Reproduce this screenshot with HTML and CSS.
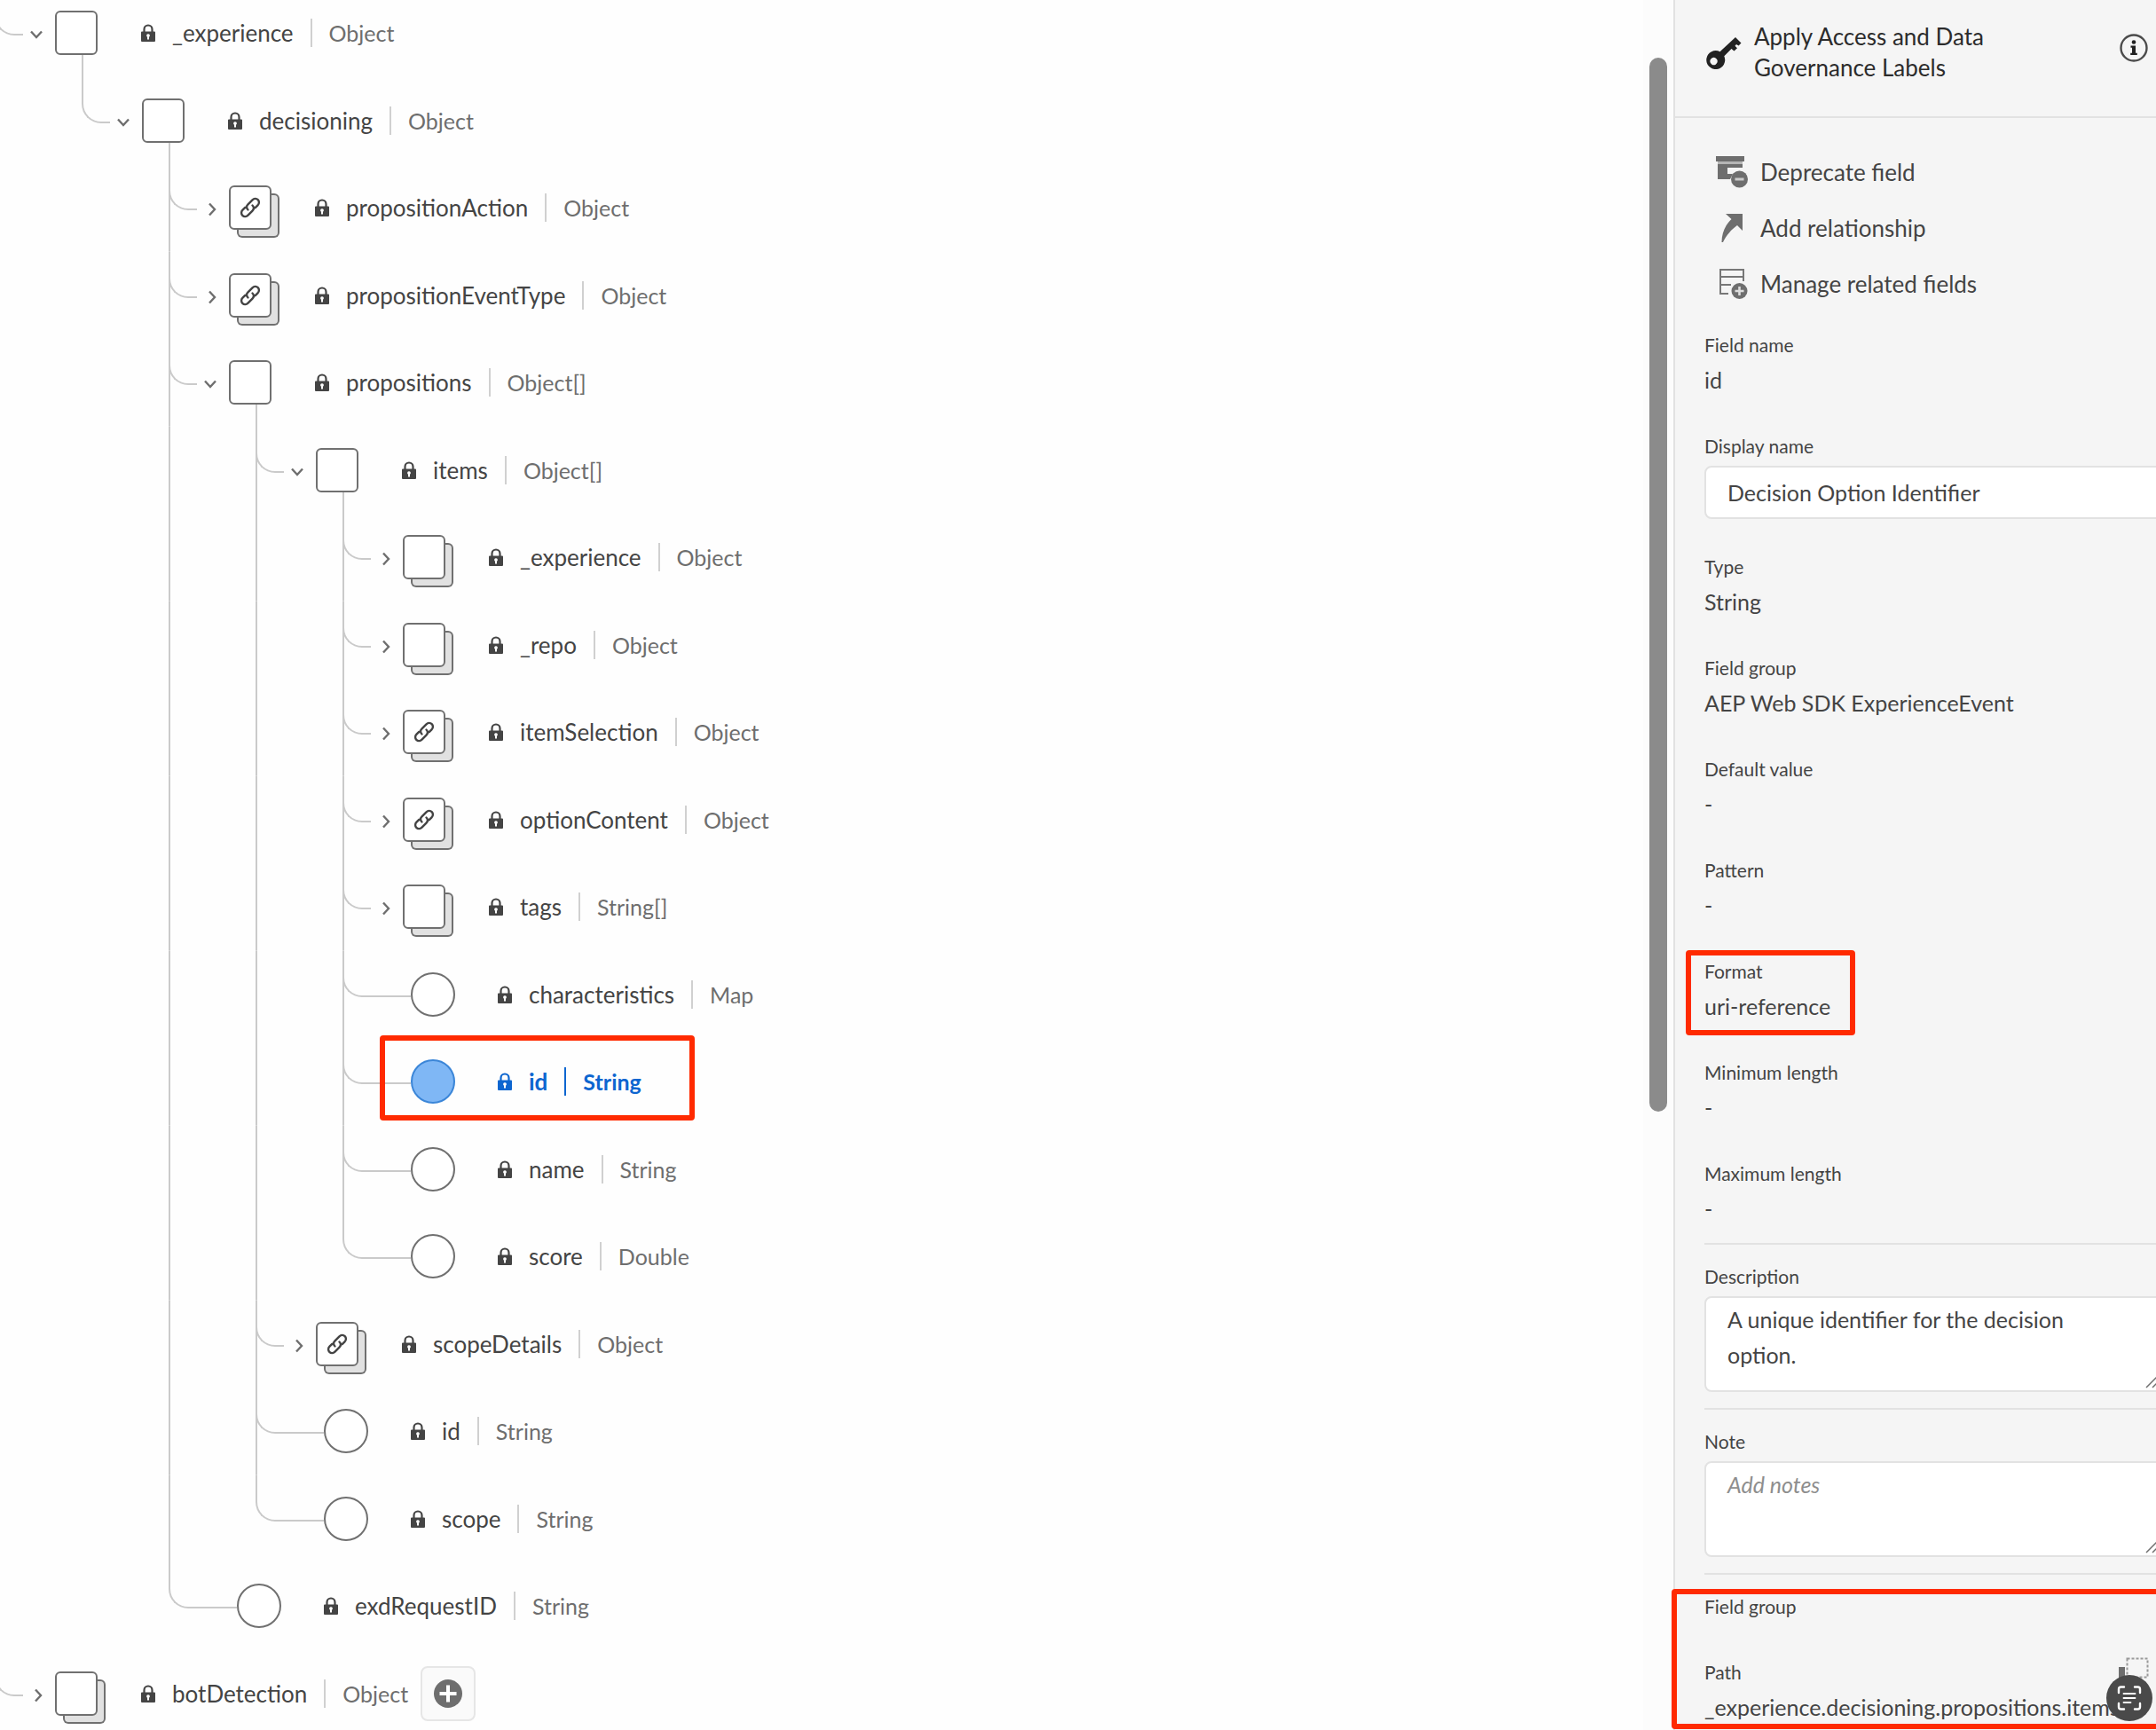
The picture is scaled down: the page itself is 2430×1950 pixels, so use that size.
FILE: index.html
```html
<!DOCTYPE html>
<html lang="en">
<head>
  <meta charset="UTF-8" />
  <meta name="viewport" content="width=device-width, initial-scale=1.0"/>
  <title>Schema editor</title>
  <link rel="stylesheet" href="styles.css">
</head>
<body>
  <svg class="defs" aria-hidden="true">
    <symbol id="lock" viewBox="0 0 16 20">
      <path d="M3.5 9V6a4.5 4.5 0 0 1 9 0v3" fill="none" stroke="currentColor" stroke-width="2.2"/>
      <path fill="currentColor" fill-rule="evenodd" d="M1 8.5h14a1 1 0 0 1 1 1V19a1 1 0 0 1-1 1H1a1 1 0 0 1-1-1V9.500a1 1 0 0 1 1-1zM8 11.200a1.900 1.900 0 0 0-1 3.500V17.500h2v-2.800a1.900 1.900 0 0 0-1-3.500z"/>
    </symbol>
    <symbol id="down" viewBox="0 0 16 16">
      <path d="M2 4.500l6 6.500 6-6.500" fill="none" stroke="currentColor" stroke-width="2.400"/>
    </symbol>
    <symbol id="right" viewBox="0 0 16 16">
      <path d="M7 1.500l6 6.500-6 6.500" fill="none" stroke="currentColor" stroke-width="2.400"/>
    </symbol>
    <symbol id="link" viewBox="0 0 26 26">
      <g fill="none" stroke="currentColor" stroke-width="2.400" stroke-linecap="round">
        <path d="M10.500 15.500c-2-2-1.800-4.300 0-6.100l5-5c1.800-1.800 4.500-1.900 6.200-.2s1.600 4.400-.2 6.200l-2.800 2.800"/>
        <path d="M15.500 10.500c2 2 1.800 4.300 0 6.100l-5 5c-1.800 1.800-4.500 1.900-6.200.2s-1.600-4.400.2-6.200l2.800-2.800"/>
      </g>
    </symbol>
  </svg>

  <div class="app">
    <main class="canvas">
      <ul class="tree">
        <li class="row">
          <span class="branch tee"><span class="elbow"></span><button class="toggle" aria-label="Collapse _experience"><svg><use href="#down"/></svg></button></span>
          <span class="node"><span class="box"></span><span class="stem"></span></span>
          <span class="label"><svg class="lock"><use href="#lock"/></svg><span class="name">_experience</span><span class="type">Object</span></span>
        </li>
        <li class="row">
          <span class="gap"></span>
          <span class="branch"><span class="elbow"></span><button class="toggle" aria-label="Collapse decisioning"><svg><use href="#down"/></svg></button></span>
          <span class="node"><span class="box"></span><span class="stem"></span></span>
          <span class="label"><svg class="lock"><use href="#lock"/></svg><span class="name">decisioning</span><span class="type">Object</span></span>
        </li>
        <li class="row">
          <span class="gap"></span><span class="gap"></span>
          <span class="branch tee"><span class="elbow"></span><button class="toggle" aria-label="Expand propositionAction"><svg><use href="#right"/></svg></button></span>
          <span class="node"><span class="box stack"><svg><use href="#link"/></svg></span></span>
          <span class="label"><svg class="lock"><use href="#lock"/></svg><span class="name">propositionAction</span><span class="type">Object</span></span>
        </li>
        <li class="row">
          <span class="gap"></span><span class="gap"></span>
          <span class="branch tee"><span class="elbow"></span><button class="toggle" aria-label="Expand propositionEventType"><svg><use href="#right"/></svg></button></span>
          <span class="node"><span class="box stack"><svg><use href="#link"/></svg></span></span>
          <span class="label"><svg class="lock"><use href="#lock"/></svg><span class="name">propositionEventType</span><span class="type">Object</span></span>
        </li>
        <li class="row">
          <span class="gap"></span><span class="gap"></span>
          <span class="branch tee"><span class="elbow"></span><button class="toggle" aria-label="Collapse propositions"><svg><use href="#down"/></svg></button></span>
          <span class="node"><span class="box"></span><span class="stem"></span></span>
          <span class="label"><svg class="lock"><use href="#lock"/></svg><span class="name">propositions</span><span class="type">Object[]</span></span>
        </li>
        <li class="row">
          <span class="gap"></span><span class="gap"></span><span class="gap line"></span>
          <span class="branch tee"><span class="elbow"></span><button class="toggle" aria-label="Collapse items"><svg><use href="#down"/></svg></button></span>
          <span class="node"><span class="box"></span><span class="stem"></span></span>
          <span class="label"><svg class="lock"><use href="#lock"/></svg><span class="name">items</span><span class="type">Object[]</span></span>
        </li>
        <li class="row">
          <span class="gap"></span><span class="gap"></span><span class="gap line"></span><span class="gap line"></span>
          <span class="branch tee"><span class="elbow"></span><button class="toggle" aria-label="Expand _experience"><svg><use href="#right"/></svg></button></span>
          <span class="node"><span class="box stack"></span></span>
          <span class="label"><svg class="lock"><use href="#lock"/></svg><span class="name">_experience</span><span class="type">Object</span></span>
        </li>
        <li class="row">
          <span class="gap"></span><span class="gap"></span><span class="gap line"></span><span class="gap line"></span>
          <span class="branch tee"><span class="elbow"></span><button class="toggle" aria-label="Expand _repo"><svg><use href="#right"/></svg></button></span>
          <span class="node"><span class="box stack"></span></span>
          <span class="label"><svg class="lock"><use href="#lock"/></svg><span class="name">_repo</span><span class="type">Object</span></span>
        </li>
        <li class="row">
          <span class="gap"></span><span class="gap"></span><span class="gap line"></span><span class="gap line"></span>
          <span class="branch tee"><span class="elbow"></span><button class="toggle" aria-label="Expand itemSelection"><svg><use href="#right"/></svg></button></span>
          <span class="node"><span class="box stack"><svg><use href="#link"/></svg></span></span>
          <span class="label"><svg class="lock"><use href="#lock"/></svg><span class="name">itemSelection</span><span class="type">Object</span></span>
        </li>
        <li class="row">
          <span class="gap"></span><span class="gap"></span><span class="gap line"></span><span class="gap line"></span>
          <span class="branch tee"><span class="elbow"></span><button class="toggle" aria-label="Expand optionContent"><svg><use href="#right"/></svg></button></span>
          <span class="node"><span class="box stack"><svg><use href="#link"/></svg></span></span>
          <span class="label"><svg class="lock"><use href="#lock"/></svg><span class="name">optionContent</span><span class="type">Object</span></span>
        </li>
        <li class="row">
          <span class="gap"></span><span class="gap"></span><span class="gap line"></span><span class="gap line"></span>
          <span class="branch tee"><span class="elbow"></span><button class="toggle" aria-label="Expand tags"><svg><use href="#right"/></svg></button></span>
          <span class="node"><span class="box stack"></span></span>
          <span class="label"><svg class="lock"><use href="#lock"/></svg><span class="name">tags</span><span class="type">String[]</span></span>
        </li>
        <li class="row">
          <span class="gap"></span><span class="gap"></span><span class="gap line"></span><span class="gap line"></span>
          <span class="branch leaf tee"><span class="elbow"></span></span>
          <span class="node"><span class="circle"></span></span>
          <span class="label"><svg class="lock"><use href="#lock"/></svg><span class="name">characteristics</span><span class="type">Map</span></span>
        </li>
        <li class="row selected">
          <span class="gap"></span><span class="gap"></span><span class="gap line"></span><span class="gap line"></span>
          <span class="branch leaf tee"><span class="elbow"></span></span>
          <span class="node"><span class="circle"></span></span>
          <span class="label"><svg class="lock"><use href="#lock"/></svg><span class="name">id</span><span class="type">String</span></span>
          <span class="mark mark-row"></span>
        </li>
        <li class="row">
          <span class="gap"></span><span class="gap"></span><span class="gap line"></span><span class="gap line"></span>
          <span class="branch leaf tee"><span class="elbow"></span></span>
          <span class="node"><span class="circle"></span></span>
          <span class="label"><svg class="lock"><use href="#lock"/></svg><span class="name">name</span><span class="type">String</span></span>
        </li>
        <li class="row">
          <span class="gap"></span><span class="gap"></span><span class="gap line"></span><span class="gap line"></span>
          <span class="branch leaf"><span class="elbow"></span></span>
          <span class="node"><span class="circle"></span></span>
          <span class="label"><svg class="lock"><use href="#lock"/></svg><span class="name">score</span><span class="type">Double</span></span>
        </li>
        <li class="row">
          <span class="gap"></span><span class="gap"></span><span class="gap line"></span>
          <span class="branch tee"><span class="elbow"></span><button class="toggle" aria-label="Expand scopeDetails"><svg><use href="#right"/></svg></button></span>
          <span class="node"><span class="box stack"><svg><use href="#link"/></svg></span></span>
          <span class="label"><svg class="lock"><use href="#lock"/></svg><span class="name">scopeDetails</span><span class="type">Object</span></span>
        </li>
        <li class="row">
          <span class="gap"></span><span class="gap"></span><span class="gap line"></span>
          <span class="branch leaf tee"><span class="elbow"></span></span>
          <span class="node"><span class="circle"></span></span>
          <span class="label"><svg class="lock"><use href="#lock"/></svg><span class="name">id</span><span class="type">String</span></span>
        </li>
        <li class="row">
          <span class="gap"></span><span class="gap"></span><span class="gap line"></span>
          <span class="branch leaf"><span class="elbow"></span></span>
          <span class="node"><span class="circle"></span></span>
          <span class="label"><svg class="lock"><use href="#lock"/></svg><span class="name">scope</span><span class="type">String</span></span>
        </li>
        <li class="row">
          <span class="gap"></span><span class="gap"></span>
          <span class="branch leaf"><span class="elbow"></span></span>
          <span class="node"><span class="circle"></span></span>
          <span class="label"><svg class="lock"><use href="#lock"/></svg><span class="name">exdRequestID</span><span class="type">String</span></span>
        </li>
        <li class="row">
          <span class="branch tee"><span class="elbow"></span><button class="toggle" aria-label="Expand botDetection"><svg><use href="#right"/></svg></button></span>
          <span class="node"><span class="box stack"></span></span>
          <span class="label"><svg class="lock"><use href="#lock"/></svg><span class="name">botDetection</span><span class="type">Object</span></span>
          <button class="add" aria-label="Add field">
            <svg viewBox="0 0 32 32"><circle cx="16" cy="16" r="16" fill="#6e6e6e"/><path d="M16 6.500v19M6.500 16h19" stroke="#fff" stroke-width="4"/></svg>
          </button>
        </li>
      </ul>
      <div class="scroll-track"><div class="scroll-thumb"></div></div>
    </main>

    <aside class="panel">
      <header class="panel-head">
        <svg class="key" viewBox="0 0 40 36">
          <path fill="#222" fill-rule="evenodd" d="M33 0l6.500 6.500-3 3-2.500-1.500-1.500 1.800 2.500 2.400-3.500 3.300-3-2.500-8.200 8.200A10.500 10.500 0 1 1 15.500 16.200zM8.500 22.800a4.200 4.200 0 1 0 .1 0z"/>
        </svg>
        <h2>Apply Access and Data Governance Labels</h2>
        <button class="info" aria-label="Information">
          <svg viewBox="0 0 32 32"><circle cx="16" cy="16" r="14.500" fill="none" stroke="#4b4b4b" stroke-width="2.400"/><circle cx="16" cy="9.500" r="2.300" fill="#222"/><path fill="#222" d="M12.500 13.500H18v8.200h1.800V24h-7.600v-2.300H14v-6h-1.500z"/></svg>
        </button>
      </header>

      <div class="actions">
        <button class="action">
          <svg viewBox="0 0 36 36"><path fill="#6e6e6e" d="M0 0h32v6H0z"/><path fill="#b5b5b5" d="M2 6h28v3H2z"/><path fill="#6e6e6e" d="M2 9h28v4H13v7h6l-3 6H2z"/><circle cx="26.500" cy="26" r="9.500" fill="#6e6e6e"/><path fill="#ccc" d="M21.500 24.500h10v3h-10z"/></svg>
          Deprecate field
        </button>
        <button class="action">
          <svg viewBox="0 0 36 36"><path fill="#6e6e6e" d="M11 2h19v19l-6-6C17 20 12 26 8 34H6.500C6.500 23 11 14 17.500 8z"/></svg>
          Add relationship
        </button>
        <button class="action">
          <svg viewBox="0 0 36 36"><g fill="none" stroke="#777" stroke-width="2"><path d="M14 29H5V2h26v13M5 10h26M5 19h12"/></g><circle cx="26.500" cy="26" r="9" fill="#6e6e6e"/><path d="M26.500 21v10M21.500 26h10" stroke="#ddd" stroke-width="2.600"/></svg>
          Manage related fields
        </button>
      </div>

      <div class="fields">
        <div class="field">
          <div class="field-label">Field name</div>
          <div class="value">id</div>
        </div>
        <div class="field">
          <label class="field-label" for="displayName">Display name</label>
          <input type="text" id="displayName" value="Decision Option Identifier" />
        </div>
        <div class="field">
          <div class="field-label">Type</div>
          <div class="value">String</div>
        </div>
        <div class="field">
          <div class="field-label">Field group</div>
          <div class="value">AEP Web SDK ExperienceEvent</div>
        </div>
        <div class="field">
          <div class="field-label">Default value</div>
          <div class="value">-</div>
        </div>
        <div class="field">
          <div class="field-label">Pattern</div>
          <div class="value">-</div>
        </div>
        <div class="field">
          <div class="field-label">Format</div>
          <div class="value">uri-reference</div>
          <span class="mark mark-format"></span>
        </div>
        <div class="field">
          <div class="field-label">Minimum length</div>
          <div class="value">-</div>
        </div>
        <div class="field">
          <div class="field-label">Maximum length</div>
          <div class="value">-</div>
        </div>
      </div>

      <div class="section">
        <label class="field-label" for="description">Description</label>
        <div class="area">
          <textarea id="description">A unique identifier for the decision option.</textarea>
          <svg class="grip" viewBox="0 0 14 14"><path d="M1 13L13 1M8 13l5-5" stroke="#6e6e6e" stroke-width="1.500"/></svg>
        </div>
      </div>
      <div class="section">
        <label class="field-label" for="note">Note</label>
        <div class="area">
          <textarea id="note" placeholder="Add notes"></textarea>
          <svg class="grip" viewBox="0 0 14 14"><path d="M1 13L13 1M8 13l5-5" stroke="#6e6e6e" stroke-width="1.500"/></svg>
        </div>
      </div>
      <div class="section">
        <div class="field-label">Field group</div>
        <div class="path-head">
          <div class="field-label">Path</div>
          <button class="copy" aria-label="Copy path">
            <svg viewBox="0 0 34 34"><path fill="#6e6e6e" d="M0 11h7v14h15v9H0z"/><rect x="9.500" y="1.500" width="23" height="21" fill="none" stroke="#999" stroke-width="2" stroke-dasharray="3 2"/></svg>
          </button>
        </div>
        <div class="value path">_experience.decisioning.propositions.items.id</div>
        <span class="mark mark-path"></span>
      </div>
    </aside>
  </div>

  <button class="scan" aria-label="Scan text">
    <svg viewBox="0 0 52 52">
      <circle cx="26" cy="26" r="26" fill="#4a4a4a"/>
      <g fill="none" stroke="#fff" stroke-width="2.400" stroke-linecap="round">
        <path d="M14 20v-4q0-2.500 2.500-2.500H20M32 13.500h3.500q2.500 0 2.500 2.500v4M38 32v4q0 2.500-2.500 2.500H32M20 38.500h-3.500Q14 38.500 14 36v-4"/>
        <path d="M19.500 21h13M19.500 26h13M19.500 31h8" stroke-width="1.800"/>
      </g>
    </svg>
  </button>
</body>
</html>
```
FILE: styles.css
```css
* {
  box-sizing: border-box;
}
body {
  margin: 0;
  overflow: hidden;
  font-family: Lato, "Open Sans", sans-serif;
  font-size: 26px;
  color: #444;
  background: #fefefe;
}
button {
  font: inherit;
  color: inherit;
  background: none;
  border: 0;
  padding: 0;
  cursor: pointer;
}
svg {
  display: block;
}
.defs {
  display: none;
}
.app {
  display: flex;
  height: 100vh;
}

/* schema tree, scrolled a little past its first row */
.canvas {
  flex: 1;
  min-width: 0;
  display: flex;
  overflow: hidden;
}
.tree {
  flex: 1;
  display: grid;
  grid-auto-rows: 1fr;
  height: calc(100vh + 20px);
  margin: -12px 0 0 -6px;
  padding: 0;
  list-style: none;
}
.row {
  position: relative;
  display: flex;
}
.gap {
  flex: 0 0 98px;
}
.line,
.tee {
  background: linear-gradient(#cacaca, #cacaca) left / 2px 100% no-repeat;
}
.branch {
  flex: 0 0 68px;
  display: flex;
}
.leaf {
  flex-basis: 77px;
}
.elbow {
  width: 32px;
  height: calc(50% + 3px);
  border: solid #cacaca;
  border-width: 0 0 2px 2px;
  border-bottom-left-radius: 22px;
}
.leaf .elbow {
  width: 100%;
}
.toggle {
  flex: 1;
  padding: 4px 0 0 7px;
  color: #6e6e6e;
}
.toggle svg {
  width: 16px;
  height: 16px;
}
.node {
  flex: 0 0 97px;
  display: grid;
  grid-template-rows: 1fr 50px 1fr;
}
.leaf + .node {
  flex-basis: 98px;
}
.box,
.circle {
  grid-row: 2;
  display: flex;
  align-items: center;
  justify-content: center;
  width: 48px;
  background: #fff;
  border: 2px solid #707070;
  border-radius: 6px;
}
.circle {
  width: 50px;
  border-radius: 50%;
}
.stack {
  box-shadow: 9px 9px 0 -2px #e1e1e1, 9px 9px 0 0 #707070;
}
.box svg {
  width: 26px;
  height: 26px;
}
.stem {
  grid-row: 3;
  width: 2px;
  margin-left: 30px;
  background: #cacaca;
}
.label {
  display: flex;
  align-items: center;
  white-space: nowrap;
}
.lock {
  width: 16px;
  height: 20px;
  margin-right: 19px;
}
.type {
  margin-left: 19px;
  padding-left: 19px;
  border-left: 2px solid #d0d0d0;
  font-size: 25px;
  line-height: 32px;
  color: #6e6e6e;
}
.selected .label {
  font-weight: bold;
  color: #0d66d0;
}
.selected .type {
  color: #0d66d0;
  border-color: #0d66d0;
}
.selected .circle {
  background: #7fb7f5;
  border-color: #3b86d8;
}
.add {
  align-self: center;
  display: flex;
  align-items: center;
  justify-content: center;
  width: 62px;
  height: 62px;
  margin-left: 14px;
  background: #fafafa;
  border: 2px solid #e6e6e6;
  border-radius: 8px;
}
.add svg {
  width: 32px;
}
.scroll-track {
  width: 34px;
  padding: 65px 7px 0;
  background: #fcfcfc;
}
.scroll-thumb {
  height: 63%;
  background: #8b8b8b;
  border-radius: 10px;
}

/* red callouts */
.mark {
  position: absolute;
  border: 6px solid #ff2a00;
  border-radius: 4px;
  pointer-events: none;
}
.mark-row {
  left: 434px;
  top: -3px;
  width: 355px;
  height: 96px;
}
.mark-format {
  left: -21px;
  top: -6px;
  width: 191px;
  height: 96px;
}
.mark-path {
  left: -37px;
  right: -20px;
  top: 16px;
  height: 158px;
}

/* field properties */
.panel {
  flex: 0 0 544px;
  min-width: 0;
  background: #f5f5f5;
  border-left: 2px solid #e2e2e2;
}
.panel-head {
  display: flex;
  align-items: flex-start;
  height: 133px;
  padding: 24px 9px 0 35px;
  border-bottom: 2px solid #e2e2e2;
}
.key {
  width: 40px;
  height: 36px;
  margin: 18px 14px 0 0;
}
h2 {
  width: 300px;
  margin: 0;
  font-size: 26px;
  font-weight: normal;
  line-height: 35px;
  color: #2c2c2c;
}
.info {
  margin: 14px 0 0 auto;
}
.info svg {
  width: 32px;
}
.actions {
  padding: 29px 0 20px 46px;
}
.action {
  display: flex;
  align-items: center;
  gap: 14px;
  height: 63px;
}
.action svg {
  width: 36px;
  height: 36px;
}
.fields {
  display: flex;
  flex-direction: column;
  gap: 36px;
  padding-left: 33px;
}
.field {
  position: relative;
}
.field-label {
  display: block;
  font-size: 21px;
  line-height: 36px;
}
.value {
  font-size: 25px;
  line-height: 42px;
}
input,
textarea {
  display: block;
  width: calc(100% + 12px);
  height: 60px;
  margin: 4px 0 0;
  padding: 0 24px;
  font: inherit;
  font-size: 25px;
  color: inherit;
  background: #fff;
  border: 2px solid #e2e2e2;
  border-radius: 8px;
}
.section {
  position: relative;
  margin: 18px 0 0 33px;
  padding-top: 18px;
  border-top: 2px solid #e2e2e2;
}
.area {
  position: relative;
}
textarea {
  height: 108px;
  padding: 4px 90px 0 24px;
  line-height: 40px;
  resize: none;
  overflow: hidden;
}
textarea::placeholder {
  font-style: italic;
  color: #8e8e8e;
}
.grip {
  position: absolute;
  right: -2px;
  bottom: 4px;
  width: 14px;
  height: 14px;
}
.path-head {
  display: flex;
  justify-content: space-between;
  height: 36px;
  margin-top: 38px;
  padding-right: 8px;
}
.copy svg {
  width: 34px;
}
.path {
  overflow: hidden;
  white-space: nowrap;
}
.scan {
  position: fixed;
  right: 4px;
  bottom: 10px;
}
.scan svg {
  width: 52px;
}
```
